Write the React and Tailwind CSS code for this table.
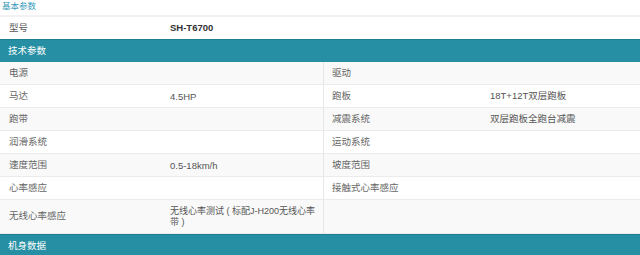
const specs = [
    ["电源", "", "驱动", ""],
    ["马达", "4.5HP", "跑板", "18T+12T双层跑板"],
    ["跑带", "", "减震系统", "双层跑板全跑台减震"],
    ["润滑系统", "", "运动系统", ""],
    ["速度范围", "0.5-18km/h", "坡度范围", ""],
    ["心率感应", "", "接触式心率感应", ""],
    ["无线心率感应", "无线心率测试 ( 标配J-H200无线心率带 )", "", ""],
];

function SectionHeader({ title }) {
    return (
        <div className="h-[23px] bg-[#268fa3] border-t border-[#1f7d90] flex items-center pl-[8px] text-[9.5px] text-white">
            {title}
        </div>
    );
}

function SpecRow({ row, index }) {
    const [label1, value1, label2, value2] = row;
    const tall = index === specs.length - 1;
    const bg = index % 2 === 0 ? "bg-[#f9f9f9]" : "bg-white";
    return (
        <div className={`flex border-b border-[#ebebeb] ${bg} ${tall ? "h-[34px]" : "h-[23px]"}`}>
            <div className="w-[160px] flex items-center pl-[9px] text-[#666]">{label1}</div>
            <div className={`w-[163px] flex items-center pl-[10px] pr-[4px] text-[#555] leading-[11px] ${tall ? "text-[9px]" : ""}`}>{value1}</div>
            <div className="w-[167px] flex items-center pl-[8px] text-[#666] border-l border-[#e6e6e6]">{label2}</div>
            <div className="flex-1 flex items-center text-[#555]">{value2}</div>
        </div>
    );
}

export default function App() {
    return (
        <div className="w-[640px] h-[255px] overflow-hidden bg-white text-[9.5px] font-['Liberation_Sans','Noto_Sans_CJK_SC',sans-serif]">
            <div className="h-[15px] pl-[2px] text-[8.5px] leading-[13px] text-[#3599b8]">基本参数</div>
            <div className="h-[24px] border-t-2 border-[#f2f2f2] flex bg-white">
                <div className="w-[160px] flex items-center pl-[9px] text-[#555]">型号</div>
                <div className="flex items-center pl-[10px] font-bold text-[#333]">SH-T6700</div>
            </div>
            <SectionHeader title="技术参数" />
            {specs.map((row, i) => (
                <SpecRow key={row[0]} row={row} index={i} />
            ))}
            <SectionHeader title="机身数据" />
        </div>
    );
}
